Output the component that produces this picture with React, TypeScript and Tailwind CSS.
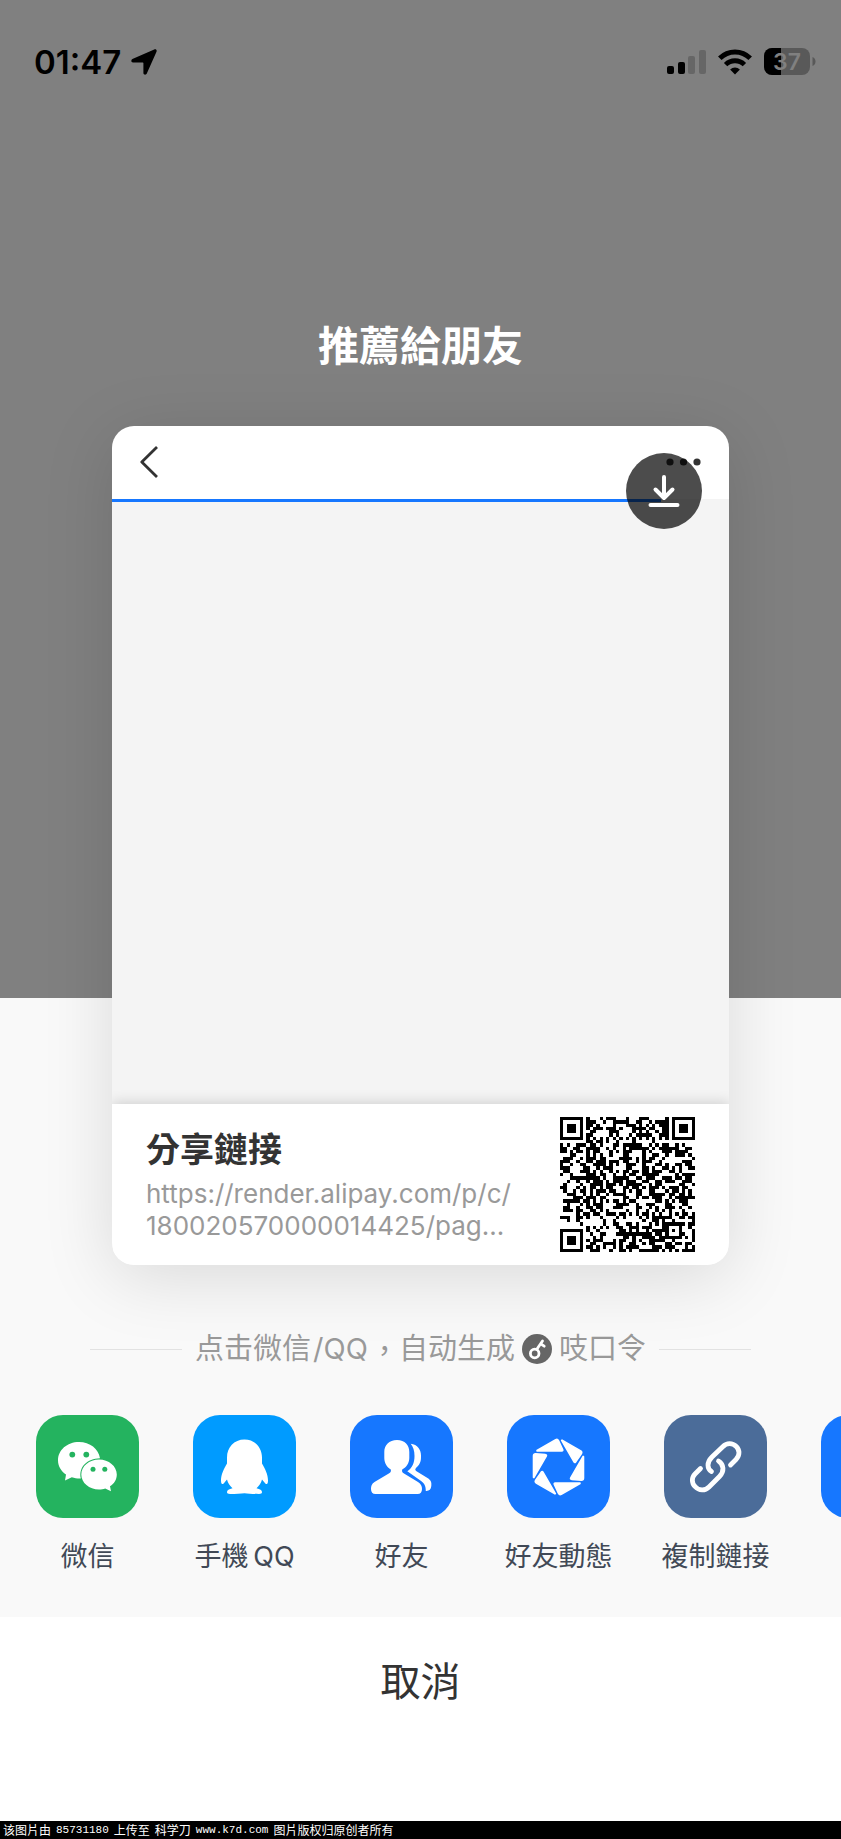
import type { ReactNode } from "react";

const FONT = "font-['Inter','Noto_Sans_CJK_TC',sans-serif]";

// QR 码：41 x 41
const QR_SIZE = 41;

function buildQr() {
  const n = QR_SIZE;
  let seed = 20570;
  const rand = () => {
    seed = (seed * 1103515245 + 12345) % 2147483648;
    return seed / 2147483648;
  };
  const ring = (x: number, y: number, cx: number, cy: number) => Math.max(Math.abs(x - cx), Math.abs(y - cy));
  let d = "";
  for (let y = 0; y < n; y++) {
    for (let x = 0; x < n; x++) {
      let on = rand() < 0.5;
      if (x === 6) on = y % 2 === 0;
      if (y === 6) on = x % 2 === 0;
      for (const [cx, cy] of [[3, 3], [n - 4, 3], [3, n - 4]]) {
        const r = ring(x, y, cx, cy);
        if (r <= 4) on = r === 3 || r <= 1;
      }
      const a = ring(x, y, n - 7, n - 7);
      if (a <= 2) on = a !== 1;
      if (on) d += `M${x} ${y}h1v1h-1z`;
    }
  }
  return d;
}

const QR_PATH = buildQr();

function StatusBar() {
  return (
    <header className="flex h-[124px] items-center justify-between pr-[25px] pl-[34px] text-black">
      <div className="flex items-center gap-[10px]">
        <time className="text-[33px] leading-none font-semibold">01:47</time>
        <svg width="26" height="26" viewBox="0 0 26 26">
          <path d="M23.2.5C24.9-.2 26.2 1 25.5 2.8L15.8 24.6C15.2 26.2 12.4 26 12.4 24V14.1Q12.4 13.5 11.8 13.5H2C0 13.5-.2 10.8 1.4 10.1Z" fill="currentColor" />
        </svg>
      </div>
      <div className="flex items-center gap-3">
        <svg width="39" height="26" viewBox="0 0 39 26">
          <rect x="0" y="17" width="7" height="8" rx="2" />
          <rect x="11" y="13" width="7" height="12" rx="2" />
          <rect x="21" y="7" width="7" height="18" rx="2" fill="#666" />
          <rect x="32" y="1" width="7" height="24" rx="2" fill="#666" />
        </svg>
        <svg width="34" height="26" viewBox="0 0 34 26">
          <path d="M1.800 9.300a21.500 21.500 0 0 1 30.400 0" fill="none" stroke="#000" strokeWidth="5" />
          <path d="M7.600 15.600a13.400 13.400 0 0 1 18.800 0" fill="none" stroke="#000" strokeWidth="4.800" />
          <path d="M17 25.500l-4.900-5a7 7 0 0 1 9.800 0z" />
        </svg>
        <svg width="52" height="28" viewBox="0 0 52 28">
          <clipPath id="battery">
            <rect width="46" height="27" rx="8" />
          </clipPath>
          <g clipPath="url(#battery)">
            <rect width="46" height="27" fill="#595959" />
            <rect width="17" height="27" />
          </g>
          <path d="M48.500 9v9c4-1.500 4-7.500 0-9z" fill="#595959" />
          <text x="23" y="21.500" textAnchor="middle" fontSize="23" fontWeight="600" fill="#808080">37</text>
        </svg>
      </div>
    </header>
  );
}

function ShareCard() {
  return (
    <article className="relative mx-[112px] -mb-[267px] overflow-hidden rounded-[22px] bg-white shadow-[0_12px_70px_rgba(0,0,0,0.13)]">
      <div className="flex h-[73px] items-center justify-between px-7 pb-[2px]">
        <button type="button" aria-label="返回">
          <svg width="19" height="32" viewBox="0 0 19 32" fill="none" stroke="#333" strokeWidth="2.800">
            <path d="M17 1L1.800 16L17 31" strokeLinejoin="round" />
          </svg>
        </button>
        <button type="button" aria-label="更多">
          <svg width="36" height="8" viewBox="0 0 36 8" fill="#333">
            <circle cx="5" cy="4" r="3.600" />
            <circle cx="18.500" cy="4" r="3.600" />
            <circle cx="32" cy="4" r="3.600" />
          </svg>
        </button>
      </div>
      <div className="h-[605px] bg-[#f4f4f4]">
        <div className="h-[3px] w-[89%] bg-[#1677ff]" />
      </div>
      <button
        type="button"
        aria-label="下載"
        className="absolute top-[27px] right-[27px] flex size-[76px] items-center justify-center rounded-full bg-black/70"
      >
        <svg width="32" height="32" viewBox="0 0 32 32" fill="none" stroke="#fff" strokeWidth="4" strokeLinecap="round" strokeLinejoin="round">
          <path d="M16 2v21M7.500 14.500L16 23l8.500-8.500M2.500 30h27" />
        </svg>
      </button>
      <div className="relative flex h-[161px] items-center justify-between bg-white px-[34px] shadow-[0_-2px_12px_rgba(0,0,0,0.14)]">
        <div>
          <h2 className="text-[34px] leading-[44px] font-bold text-[#333]">分享鏈接</h2>
          <p className="mt-[6px] text-[26px] leading-8 text-[#999]">
            https://render.alipay.com/p/c/
            <br />
            180020570000014425/pag...
          </p>
        </div>
        <svg width="135" height="135" viewBox={`0 0 ${QR_SIZE} ${QR_SIZE}`} shapeRendering="crispEdges">
          <path d={QR_PATH} />
        </svg>
      </div>
    </article>
  );
}

type Target = { label: string; tile: string; icon: ReactNode };

const TARGETS: Target[] = [
  {
    label: "微信",
    tile: "bg-[#24b35f]",
    icon: (
      <svg viewBox="0 0 103 103" fill="#fff">
        <path d="M43 27c-12 0-21 8.200-21 18.300 0 5.900 3 10.900 8 14.200L29 65.600l6.800-3.400c3 1 5.500 1.400 9 1.300C42.500 52 51 43.600 64 43.300 62.500 33.800 54 27 43 27z" />
        <path d="M63 44.500c-9.800 0-17.700 6.700-17.700 15s7.900 15 17.700 15c2.400 0 4.300-.3 6.200-1l5.800 2.800-1-5c4.300-2.700 6.800-7 6.800-11.800 0-8.300-8-15-17.800-15z" />
        <g fill="#24b35f">
          <circle cx="36.300" cy="39.600" r="2.900" />
          <circle cx="50.300" cy="39.600" r="2.900" />
          <circle cx="57" cy="54.300" r="2.500" />
          <circle cx="68.800" cy="54.300" r="2.500" />
        </g>
      </svg>
    ),
  },
  {
    label: "手機\u2009QQ",
    tile: "bg-[#009bff]",
    icon: (
      <svg viewBox="0 0 103 103" fill="#fff">
        <path d="M51.500 24.500c-10.500 0-17.500 8-17.500 18v6c-3 5-6 11-6 17 0 4 1.500 4.500 3.500 2l2.500-3c.8 3.300 2.800 6.400 5.500 8.700-3.500.8-5.500 2-5.500 3.800 0 1.500 1 1.900 3 1.900 5.500 0 11-.1 14.500-.7 3.500.6 9 .7 14.500.7 2 0 3-.4 3-1.900 0-1.800-2-3-5.500-3.800 2.700-2.300 4.700-5.400 5.500-8.700l2.500 3c2 2.500 3.500 2 3.500-2 0-6-3-12-6-17v-6c0-10-7-18-17.500-18z" />
      </svg>
    ),
  },
  {
    label: "好友",
    tile: "bg-[#1677ff]",
    icon: (
      <svg viewBox="0 0 103 103" fill="#fff">
        <path d="M47 25c-8 0-12.700 5-12.700 12v6c0 5 2.700 9.200 6.500 11.500.5 2-.3 3.200-2 4.100L24.500 67C21.500 69 21 71 21 74c0 3 1.500 5 4.500 5h42c3 0 4.500-2 4.500-5s-1-5-4-7l-14-8.400c-1.700-.9-2.300-2.100-1.800-4.100C56.500 52.200 59.300 48 59.300 43v-6C59.300 30 55 25 47 25z" />
        <path d="M60.700 28.700C67.500 29.500 71 34.500 71 40.500c0 4 .3 8-5 12.500-1.200 1.300-.8 2.300.5 3.200L77.500 63c3.500 2.200 4.300 4.500 3.800 8-.4 3.500-2.300 5.200-5.500 4.900 0-4.500-1.200-7.500-4.700-9.900L57.300 56.300c5-3.500 7.200-8.300 7.200-15.300 0-5.500-1.300-9-3.800-12.300z" />
      </svg>
    ),
  },
  {
    label: "好友動態",
    tile: "bg-[#1677ff]",
    icon: (
      <svg viewBox="0 0 103 103" fill="#fff" stroke="#fff" strokeWidth="1.500" strokeLinejoin="round">
        {[0, 60, 120, 180, 240, 300].map((deg) => (
          <path key={deg} d="M30 35.500L48.700 24.700Q50.500 23.800 51.500 25.600L55.700 34.500Q56.200 36 54.800 36L30 36z" transform={`rotate(${deg} 51.500 52)`} />
        ))}
      </svg>
    ),
  },
  {
    label: "複制鏈接",
    tile: "bg-[#4b6c99]",
    icon: (
      <svg viewBox="0 0 103 103" fill="none" stroke="#fff" strokeWidth="4.800" strokeLinecap="round">
        <path d="M36.500 53.500L31 59C27.500 62.500 27.500 68 31 71.500c4 4.500 10 4.500 14 .5L55.500 61.500c5-5 4.500-12-1-15.500" />
        <path d="M66.500 50l5.500-5.500c4-4 3.800-9.500.3-13-3.800-3.800-9.500-4-13.300 0L48 42c-5.500 5.500-5 11.500-.5 14.500" />
      </svg>
    ),
  },
  { label: "", tile: "bg-[#1677ff]", icon: null },
];

function Hint() {
  return (
    <div className="mx-[90px] flex items-center gap-[13px] text-[29px] leading-[40px] text-[#999]">
      <span className="h-px flex-1 bg-[#e2e2e2]" />
      <p className="flex items-center font-['Inter','Noto_Sans_CJK_SC',sans-serif] whitespace-nowrap">
        <span>点击微信</span>
        <span className="px-[2px]">/QQ</span>
        <span lang="zh-Hant" className="font-['Noto_Sans_CJK_TC',sans-serif]">，</span>
        <span>自动生成</span>
        <svg width="30" height="30" viewBox="0 0 30 30" className="mx-[7px]">
          <circle cx="15" cy="15" r="15" fill="#666" />
          <g fill="none" stroke="#fff" strokeWidth="2.800" strokeLinecap="round">
            <circle cx="12.700" cy="19.500" r="4.300" />
            <path d="M15 15L20.500 7M18.800 9.800l3.400 2.400" />
          </g>
        </svg>
        <span>吱口令</span>
      </p>
      <span className="h-px flex-1 bg-[#e2e2e2]" />
    </div>
  );
}

export default function App() {
  return (
    <div lang="zh-Hant" className={`${FONT} min-h-screen overflow-hidden bg-white`}>
      <section className="flex flex-col bg-[#808080]">
        <StatusBar />
        <h1 className="pt-[192px] pb-[50px] text-center text-[41px] leading-[60px] font-bold text-white">推薦給朋友</h1>
        <ShareCard />
      </section>

      <section className="bg-[#f9f9f9] pt-[331px]">
        <Hint />
        <ul className="flex h-[248px] overflow-hidden pt-[46px] pl-[9px]">
          {TARGETS.map((t) => (
            <li key={t.tile + t.label} className="w-[157px] shrink-0">
              <button type="button" aria-label={t.label || "更多"} className="flex w-full flex-col items-center">
                <span className={`${t.tile} size-[103px] rounded-[27px]`}>{t.icon}</span>
                {t.label && <span className="mt-5 text-[27px] leading-[38px] text-[#414956]">{t.label}</span>}
              </button>
            </li>
          ))}
        </ul>
      </section>

      <button type="button" className="block w-full bg-white pt-[35px] pb-[109px] text-center text-[40px] leading-[60px] text-[#333]">
        取消
      </button>

      <footer className="flex h-[18px] gap-[5px] overflow-hidden bg-black pl-[3px] font-['Noto_Sans_CJK_SC',sans-serif] text-xs leading-[18px] text-white">
        <span>该图片由</span>
        <span className="font-['Liberation_Mono',monospace] text-[11px]">85731180</span>
        <span>上传至</span>
        <span>科学刀</span>
        <span className="font-['Liberation_Mono',monospace] text-[11px]">www.k7d.com</span>
        <span>图片版权归原创者所有</span>
      </footer>
    </div>
  );
}
